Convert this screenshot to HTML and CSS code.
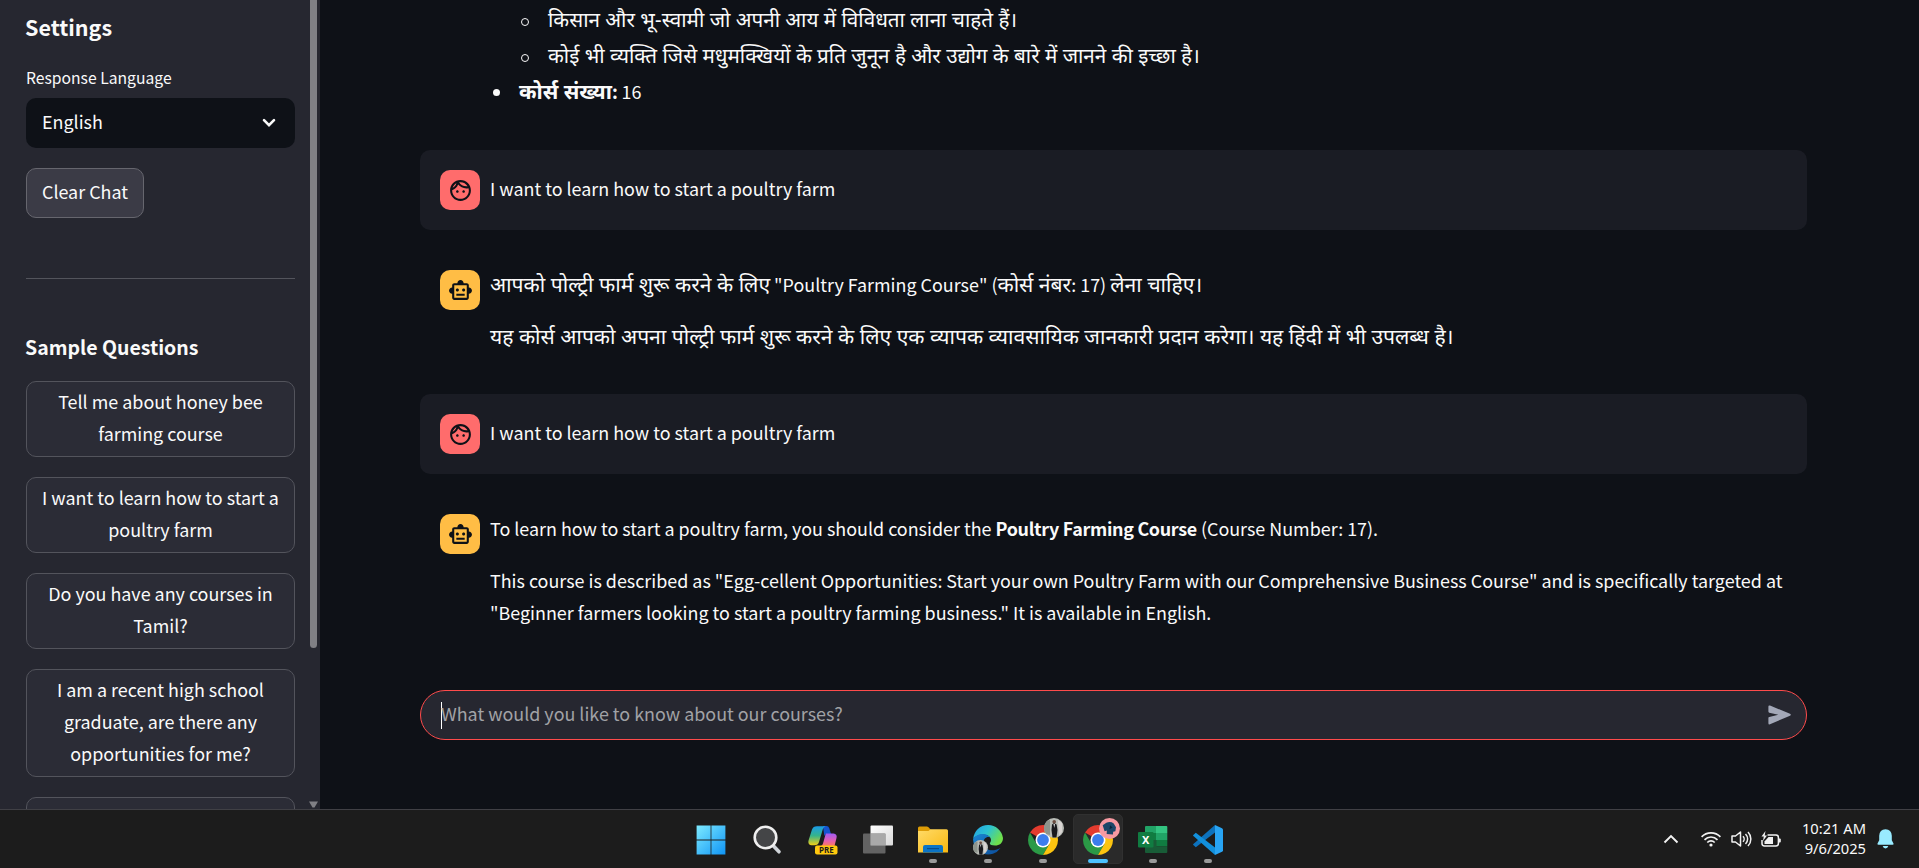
FILE: index.html
```html
<!DOCTYPE html>
<html lang="en">
<head>
<meta charset="utf-8">
<title>Course Assistant</title>
<link rel="stylesheet" href="styles.css">
</head>
<body>
<svg class="defs" width="0" height="0" aria-hidden="true">
  <defs>
    <symbol id="face" viewBox="0 0 24 24"><path d="M10.25 13c0 .69-.56 1.25-1.25 1.25S7.75 13.69 7.75 13s.56-1.25 1.25-1.25 1.25.56 1.25 1.25zM15 11.75c-.69 0-1.25.56-1.25 1.25s.56 1.25 1.25 1.25 1.25-.56 1.25-1.25-.56-1.25-1.25-1.25zm7 .25c0 5.52-4.48 10-10 10S2 17.52 2 12 6.48 2 12 2s10 4.48 10 10zM10.66 4.12C12.06 6.44 14.6 8 17.5 8c.46 0 .91-.05 1.34-.12C17.44 5.56 14.9 4 12 4c-.46 0-.91.05-1.34.12zM4.42 9.47c1.71-.97 3.03-2.55 3.66-4.44C6.37 6 5.05 7.58 4.42 9.47zM20 12c0-.78-.12-1.53-.33-2.24-.7.15-1.42.24-2.17.24-3.13 0-5.92-1.44-7.76-3.69C8.69 8.87 6.6 10.88 4 11.86c.01.04 0 .09 0 .14 0 4.42 3.58 8 8 8s8-3.58 8-8z"/></symbol>
    <symbol id="bot" viewBox="0 0 24 24"><path d="M20 9V7c0-1.1-.9-2-2-2h-3c0-1.66-1.34-3-3-3S9 3.34 9 5H6c-1.1 0-2 .9-2 2v2c-1.66 0-3 1.34-3 3s1.34 3 3 3v4c0 1.1.9 2 2 2h12c1.1 0 2-.9 2-2v-4c1.66 0 3-1.34 3-3s-1.34-3-3-3zm-2 10H6V7h12v12zm-9-6c-.83 0-1.5-.67-1.5-1.5S8.17 10 9 10s1.5.67 1.5 1.5S9.83 13 9 13zm7.5-1.5c0 .83-.67 1.5-1.5 1.5s-1.5-.67-1.5-1.5.67-1.5 1.5-1.5 1.5.67 1.5 1.5zM8 15h8v2H8v-2z"/></symbol>
    <symbol id="chrome" viewBox="0 0 30 30">
      <path d="M15 15 2.01 7.5A15 15 0 0 1 27.99 7.5L15 7.5z" fill="#e33b2e"/>
      <path d="M2.01 7.5A15 15 0 0 0 15 30L21.5 18.75 15 15 8.5 18.75z" fill="#2b9a46"/>
      <path d="M27.99 7.5A15 15 0 0 1 15 30L21.5 18.75 15 15V7.5z" fill="#fcc410"/>
      <circle cx="15" cy="15" r="7.5" fill="#fff"/><circle cx="15" cy="15" r="5.9" fill="#3b7ded"/>
    </symbol>
    <symbol id="person" viewBox="0 0 20 20">
      <circle cx="10" cy="10" r="10" fill="#b9bcb6"/>
      <path d="M3 3a10 10 0 0 0-1 13l4 1V2z" fill="#8d948c"/><path d="M14 2l4 3v9l-3 4z" fill="#d8d4d2"/>
      <path d="M8 6.5 10 5l2.600 1.500L13.500 12l-1 7.500h-4L7.500 12z" fill="#19191d"/>
      <circle cx="10.200" cy="3.800" r="1.800" fill="#6b4c40"/><path d="M9.500 6h1.400l-.6 4z" fill="#eee"/>
    </symbol>
    <linearGradient id="gWin" x1="0" y1="0" x2="1" y2="1"><stop offset="0" stop-color="#7deaff"/><stop offset="1" stop-color="#0f94f5"/></linearGradient>
    <linearGradient id="gCopA" x1="0" y1="0" x2="0" y2="1"><stop offset="0" stop-color="#1a9be8"/><stop offset=".5" stop-color="#35b48b"/><stop offset="1" stop-color="#f2cf17"/></linearGradient>
    <linearGradient id="gCopB" x1="0" y1="0" x2="0" y2="1"><stop offset="0" stop-color="#a05cf5"/><stop offset=".6" stop-color="#e75fae"/><stop offset="1" stop-color="#fb7a5a"/></linearGradient>
    <linearGradient id="gView" x1="0" y1="0" x2="1" y2="1"><stop offset="0" stop-color="#fff"/><stop offset="1" stop-color="#d8d8d8"/></linearGradient>
    <linearGradient id="gFold" x1="0" y1="0" x2="1" y2="1"><stop offset="0" stop-color="#ffdb68"/><stop offset="1" stop-color="#f9b810"/></linearGradient>
    <linearGradient id="gEdge" x1="0" y1="0" x2="1" y2=".5"><stop offset="0" stop-color="#239fe5"/><stop offset=".5" stop-color="#2cc3d2"/><stop offset="1" stop-color="#6fe04b"/></linearGradient>
    <linearGradient id="gEdge2" x1="0" y1="0" x2="1" y2="1"><stop offset="0" stop-color="#1b88d6"/><stop offset="1" stop-color="#0b4b98"/></linearGradient>
  </defs>
</svg>

<div class="app">
  <aside class="sidebar">
    <div class="side-content">
      <h2 class="side-title">Settings</h2>
      <label class="field-label">Response Language</label>
      <div class="select"><span>English</span>
        <svg width="14" height="10" viewBox="0 0 14 10"><path d="M2 2.200 7 7.200 12 2.200" fill="none" stroke="#fafafa" stroke-width="2.600" stroke-linecap="round"/></svg>
      </div>
      <button class="btn btn-clear">Clear Chat</button>
      <hr class="divider">
      <h2 class="side-title side-title-2">Sample Questions</h2>
      <div class="samples">
        <button class="btn sample">Tell me about honey bee<br>farming course</button>
        <button class="btn sample">I want to learn how to start a<br>poultry farm</button>
        <button class="btn sample">Do you have any courses in<br>Tamil?</button>
        <button class="btn sample">I am a recent high school<br>graduate, are there any<br>opportunities for me?</button>
        <button class="btn sample sample-next"></button>
      </div>
    </div>
    <div class="scroll">
      <div class="thumb"></div>
      <svg class="down" width="9" height="7" viewBox="0 0 9 7"><path d="M0 .5h9L5.500 6.500h-2z" fill="#808085"/></svg>
    </div>
  </aside>

  <main class="main">
    <div class="chat">
      <ul class="list">
        <li class="sub"><i class="ring"></i><span><span class="hi">किसान और भू-स्वामी जो अपनी आय में विविधता लाना चाहते हैं।</span></span></li>
        <li class="sub"><i class="ring"></i><span><span class="hi">कोई भी व्यक्ति जिसे मधुमक्खियों के प्रति जुनून है और उद्योग के बारे में जानने की इच्छा है।</span></span></li>
        <li class="top"><i class="dot"></i><span><b><span class="hi">कोर्स संख्या</span>:</b> 16</span></li>
      </ul>
      <section class="msg user">
        <div class="avatar"><svg width="25" height="25"><use href="#face"/></svg></div>
        <div class="body"><p>I want to learn how to start a poultry farm</p></div>
      </section>
      <section class="msg">
        <div class="avatar bot"><svg width="25" height="25"><use href="#bot"/></svg></div>
        <div class="body">
          <p><span class="hi">आपको पोल्ट्री फार्म शुरू करने के लिए</span> "Poultry Farming Course" (<span class="hi">कोर्स नंबर</span>: 17) <span class="hi">लेना चाहिए।</span></p>
          <p><span class="hi">यह कोर्स आपको अपना पोल्ट्री फार्म शुरू करने के लिए एक व्यापक व्यावसायिक जानकारी प्रदान करेगा। यह हिंदी में भी उपलब्ध है।</span></p>
        </div>
      </section>
      <section class="msg user">
        <div class="avatar"><svg width="25" height="25"><use href="#face"/></svg></div>
        <div class="body"><p>I want to learn how to start a poultry farm</p></div>
      </section>
      <section class="msg">
        <div class="avatar bot"><svg width="25" height="25"><use href="#bot"/></svg></div>
        <div class="body">
          <p>To learn how to start a poultry farm, you should consider the <b>Poultry Farming Course</b> (Course Number: 17).</p>
          <p>This course is described as "Egg-cellent Opportunities: Start your own Poultry Farm with our Comprehensive Business Course" and is specifically targeted at<br>"Beginner farmers looking to start a poultry farming business." It is available in English.</p>
        </div>
      </section>
    </div>
    <div class="composer">
      <span class="caret"></span><span class="placeholder">What would you like to know about our courses?</span>
      <svg class="send" width="24" height="20" viewBox="0 0 24 20"><path d="M.4 1.600Q.4 0 2 .5L22 8.800q1.600.9 0 1.900L2 19.300Q.4 19.800.4 18.200V13q0-.8.9-1L10.300 9.800 1.300 7.700Q.4 7.500.4 6.600z" fill="#a3a8b8"/></svg>
    </div>
  </main>
</div>

<footer class="taskbar">
  <nav class="apps">
    <div class="app-icon wide"><svg width="30" height="30" viewBox="0 0 30 30"><path d="M.6.600h14v14H.6zM15.400.600h14v14h-14zM.6 15.400h14v14H.6zM15.400 15.400h14v14h-14z" fill="url(#gWin)"/></svg></div>
    <div class="app-icon wide"><svg width="30" height="30" viewBox="0 0 30 30"><path d="m21.500 21 5.500 5.800" stroke="#cfd3d8" stroke-width="3.600" stroke-linecap="round"/><circle cx="13.500" cy="12.500" r="10.800" fill="#444547" stroke="#efefef" stroke-width="2.600"/></svg></div>
    <div class="app-icon"><svg width="30" height="30" viewBox="0 0 30 30">
      <path d="M15 1h3.500q2 0 2.700 2l1.800 6h-4q-2 0-2.700 2z" fill="#1554cf"/>
      <path d="M9 1.200h8.500q-2 .8-2.700 3L11 17q-1 3.200-4.500 3.200H3.500q-4-.3-2.900-5L4 4.500Q5 1.300 9 1.200z" fill="url(#gCopA)"/>
      <path d="M18 8.500h7.500q4 .5 3 4.500l-2 8H13q1.500-.8 2-2.500l2.500-9z" fill="url(#gCopB)"/>
      <rect x="7" y="20.500" width="22.500" height="9" rx="2" fill="#ffc90e"/><text x="18.300" y="28" class="pre">PRE</text></svg></div>
    <div class="app-icon"><svg width="30" height="30" viewBox="0 0 30 30"><rect x="7.500" y=".5" width="22.500" height="20" rx="1" fill="url(#gView)"/><rect x="0" y="8.500" width="22.500" height="20" rx="1" fill="#707070" opacity=".85"/><path d="M7.500 8.500h15v12h-15z" fill="#a9a9a9"/></svg></div>
    <div class="app-icon run"><svg width="30" height="30" viewBox="0 0 30 30"><path d="M0 3q0-1.500 1.500-1.500h7.300q1 0 1.700.8L13 5v5H0z" fill="#dd9c06"/><path d="M0 6h10.500l2-1.700H28.500Q30 4.300 30 5.800V27.500H0z" fill="url(#gFold)"/><path d="M5 27.500V22q0-2 2-2H23q2 0 2 2v5.500z" fill="#0b74c6"/><path d="M9 23.600h12" stroke="#064b8c" stroke-width="1.200"/></svg></div>
    <div class="app-icon run"><svg width="30" height="30" viewBox="0 0 30 30">
      <path d="M15 0a15 15 0 0 1 15 13c0 5-3.500 7.500-8 7.500-4 0-5.800-1.300-5-2.600 1.200-1.700 1.400-3.700.2-5.500C14 8 4 8.500.2 14 1 6 7 0 15 0z" fill="url(#gEdge)"/>
      <path d="M.1 14C4 7.500 14 8 17.200 12.400 12.500 11 9.500 15 11 20c1.500 5 8 7.500 16.500 3A15 15 0 0 1 .1 14z" fill="url(#gEdge2)"/></svg>
      <svg class="badge edge-badge" width="15" height="15"><use href="#person"/></svg></div>
    <div class="app-icon run"><svg width="30" height="30"><use href="#chrome"/></svg><svg class="badge" width="20" height="20"><use href="#person"/></svg></div>
    <div class="app-icon run active"><svg width="30" height="30"><use href="#chrome"/></svg>
      <svg class="badge" width="21" height="21" viewBox="0 0 20 20"><circle cx="10" cy="10" r="10" fill="#f89aa2"/><path d="M3.500 7 7 4.500q4-1.500 7 .7l2.200 3.500-.6 4-2.100.3-.2 2.800-6-.6.200-3.400-2.200.7z" fill="#1d4668"/><path d="m10.500 7 2.500 2-3 1.600z" fill="#0c2239"/></svg></div>
    <div class="app-icon run"><svg width="30" height="30" viewBox="0 0 30 30">
      <path d="M8 1h10.500v7H7V2q0-1 1-1z" fill="#21a366"/><path d="M18 1h10.300q1 0 1 1v6H18z" fill="#33c481"/><path d="M7 8h11.500v7H7z" fill="#107c41"/><path d="M18 8h11.300v7H18z" fill="#21a366"/><path d="M18 15h11.300v6.500H18z" fill="#107c41"/><path d="M7 15h11.500v6.500h10.800V27q0 1-1 1H8q-1 0-1-1z" fill="#185c37"/>
      <rect x="0" y="7" width="15.500" height="15.500" rx="1" fill="#107c41"/><text x="7.700" y="18.700" class="xl">X</text></svg></div>
    <div class="app-icon run"><svg width="30" height="30" viewBox="0 0 30 30"><path d="M22 7.500 2.800 22.300.3 20.100Q-.2 19.500.4 18.900L22 0z" fill="#0d72bd"/><path d="M22 22.500 2.800 7.700.3 9.900q-.5.600.1 1.200L22 30z" fill="#1290dc"/><path d="M22 0 29 3.200q1 .5 1 1.600v20.400q0 1.100-1 1.600L22 30z" fill="#28a4f3"/></svg></div>
  </nav>
  <div class="tray">
    <svg class="t-chev" width="16" height="10" viewBox="0 0 16 10"><path d="m1.500 8.500 6.500-6.500 6.500 6.500" fill="none" stroke="#f2f2f2" stroke-width="1.900"/></svg>
    <svg class="t-wifi" width="20" height="16" viewBox="0 0 20 16" fill="none" stroke="#f2f2f2" stroke-width="1.700"><path d="M.6 5.800a13 13 0 0 1 18.800 0M3.500 8.800a9 9 0 0 1 13 0M6.300 11.500a5.200 5.200 0 0 1 7.400 0"/><circle cx="10" cy="14" r="1.600" fill="#f2f2f2" stroke="none"/></svg>
    <svg class="t-vol" width="21" height="18" viewBox="0 0 21 18" fill="none" stroke="#f2f2f2" stroke-width="1.500"><path d="M1 6h3.500L9.500 2v14l-5-4H1z" stroke-linejoin="round"/><path d="M12 6.200a4 4 0 0 1 0 5.600M14.500 4a7 7 0 0 1 0 10M17 2a10 10 0 0 1 0 14"/></svg>
    <svg class="t-bat" width="21" height="17" viewBox="0 0 21 17"><path d="M6.500 4H15q2.400 0 2.400 2.400v6.200q0 2.400-2.400 2.400H3.400Q1 15 1 12.600V9" fill="none" stroke="#f2f2f2" stroke-width="1.500"/><path d="M17.800 7.500h1q1 0 1 1v2q0 1-1 1h-1z" fill="#f2f2f2"/><path d="M7.500 6H12v7H3.500v-2.500z" fill="#f2f2f2"/><path d="M4.500 0 .5 5.500h2.300L2 10l4-5.500H3.700z" fill="#f2f2f2"/></svg>
    <div class="clock"><span>10:21 AM</span><span>9/6/2025</span></div>
    <svg class="t-bell" width="17" height="20" viewBox="0 0 17 20"><path d="M8.500.300q6 .3 6.300 6.500v4.500l1.700 3.200q.4 1.300-1 1.300H1.500q-1.400 0-1-1.300l1.700-3.200V6.800Q2.500.600 8.500.300zM5.700 17h5.600q-.6 2.400-2.800 2.400T5.700 17z" fill="#99ebff"/></svg>
  </div>
</footer>
</body>
</html>
```

FILE: styles.css
```css
* { box-sizing: border-box; }

body {
  margin: 0;
  width: 1919px;
  height: 868px;
  overflow: hidden;
  display: flex;
  flex-direction: column;
  background: #0e1117;
  color: #fafafa;
  font-family: "Noto Sans CJK SC", "Noto Sans", sans-serif;
  font-size: 17.920px;
  line-height: 32px;
}

.defs { position: absolute; }
h2, p, ul { margin: 0; padding: 0; }
b { letter-spacing: -0.300px; }
svg { display: block; flex: none; }

.app { display: flex; height: 809px; overflow: hidden; }

/* Sidebar */
.sidebar { width: 320px; flex: none; background: #262730; display: flex; }
.side-content { width: 310px; height: 809px; padding: 12px 15px 0 26px; overflow: hidden; }
.side-title { font-size: 21.500px; line-height: 30px; font-weight: 600; margin-left: -1px; }
.field-label { display: block; font-size: 15.700px; line-height: 26px; margin: 23px 0 7px; }
.select {
  height: 50px;
  display: flex;
  align-items: center;
  justify-content: space-between;
  padding: 0 19px 0 16px;
  border-radius: 10px;
  background: #0e1117;
}
.select span { margin-top: -4px; }
.btn {
  display: block;
  font: inherit;
  color: #fafafa;
  background: #2b2c36;
  border: 1px solid #53545c;
  border-radius: 10px;
  padding: 3px 0 7px;
}
.btn-clear {
  width: 118px;
  height: 50px;
  margin-top: 20px;
  background: #3b3b46;
  border-color: #66666e;
  padding: 0 0 4px;
}
.divider { margin: 60px 0 0; border: 0; height: 1px; background: #53545c; }
.side-title-2 { margin-top: 53px; font-size: 19.500px; }
.samples { display: flex; flex-direction: column; gap: 20px; margin-top: 19px; }
.sample { width: 100%; flex: none; }
.sample-next { height: 76px; }
.scroll {
  width: 10px;
  display: flex;
  flex-direction: column;
  justify-content: space-between;
}
.thumb { width: 7px; height: 648px; background: #808085; border-radius: 0 0 4px 4px; }
.down { margin: 0 0 1px -1px; }

/* Conversation */
.main { flex: 1; padding: 1px 112px 0 100px; }
.chat { height: 689px; }
.list { list-style: none; height: 149px; }
.list li { height: 36px; display: flex; align-items: center; white-space: nowrap; }
.list li > span { height: 32px; }
.sub { padding-left: 101px; }
.top { padding-left: 73px; }
.ring { width: 8px; height: 8px; border: 1px solid #fafafa; border-radius: 50%; margin: 5px 19px 0 0; }
.dot { width: 7px; height: 7px; background: #fafafa; border-radius: 50%; margin: 2px 19px 0 0; }
.hi { font-family: "Noto Sans Devanagari", "Noto Sans", sans-serif; font-size: 21.100px; line-height: 1; letter-spacing: 0; }
.sub .hi { font-size: 20.650px; }

.msg { display: flex; gap: 10px; padding: 20px; margin-bottom: 20px; border-radius: 10px; }
.msg.user { background: #1a1c24; height: 80px; }
.avatar {
  width: 40px;
  height: 40px;
  flex: none;
  border-radius: 10px;
  background: #ff6c6c;
  fill: #0e1117;
  display: flex;
  align-items: center;
  justify-content: center;
}
.avatar.bot { background: #ffbd45; }
.body { display: flex; flex-direction: column; gap: 20px; padding-top: 2px; white-space: nowrap; }
.msg:not(.user) .body { padding: 0 0 2px; margin-top: -2px; }
.body p { min-height: 32px; }
.msg:nth-of-type(2) .body p { height: 32px; }

.composer {
  height: 50px;
  display: flex;
  align-items: center;
  padding: 0 14px 0 20px;
  border: 1px solid #ff4b4b;
  border-radius: 25px;
  background: #262730;
}
.caret { width: 1px; height: 27px; background: #fff; margin-right: -1px; }
.placeholder { flex: 1; color: #a1a2a6; padding-bottom: 5px; }

/* Taskbar */
.taskbar {
  height: 59px;
  display: flex;
  justify-content: space-between;
  background: #1c1c1c;
  border-top: 1px solid #404045;
}
.apps { display: flex; gap: 5px; padding: 4px 0 0 686px; }
.app-icon {
  position: relative;
  width: 50px;
  height: 50px;
  border-radius: 5px;
  border: 1px solid transparent;
  display: flex;
  justify-content: center;
  padding-top: 10px;
}
.app-icon.wide { margin-right: 1px; }
.app-icon.active { background: #2a2a2a; border-color: #303030; }
.app-icon.run::after {
  content: "";
  position: absolute;
  bottom: 0;
  left: 20px;
  width: 8px;
  height: 4px;
  border-radius: 2px;
  background: #9a9a9a;
}
.app-icon.active::after { left: 14px; width: 20px; background: #4cc2ff; }
.badge { position: absolute; left: 25px; top: 3px; }
.edge-badge { left: 9px; top: 25px; }
.pre { font: 700 8px "Noto Sans", sans-serif; text-anchor: middle; fill: #1c1c1c; }
.xl { font: 700 11px "Noto Sans", sans-serif; text-anchor: middle; fill: #fff; }

.tray { display: flex; align-items: center; padding: 0 25px 0 0; }
.t-chev { margin-right: 22px; }
.t-wifi { margin-right: 10px; }
.t-vol { margin-right: 9px; }
.t-bat { margin-right: 18px; }
.clock {
  width: 66px;
  display: flex;
  flex-direction: column;
  align-items: flex-end;
  margin-top: -3px;
  font: 14.700px/20px "Noto Sans", sans-serif;
  white-space: nowrap;
}
.t-bell { margin-left: 11px; }
```
